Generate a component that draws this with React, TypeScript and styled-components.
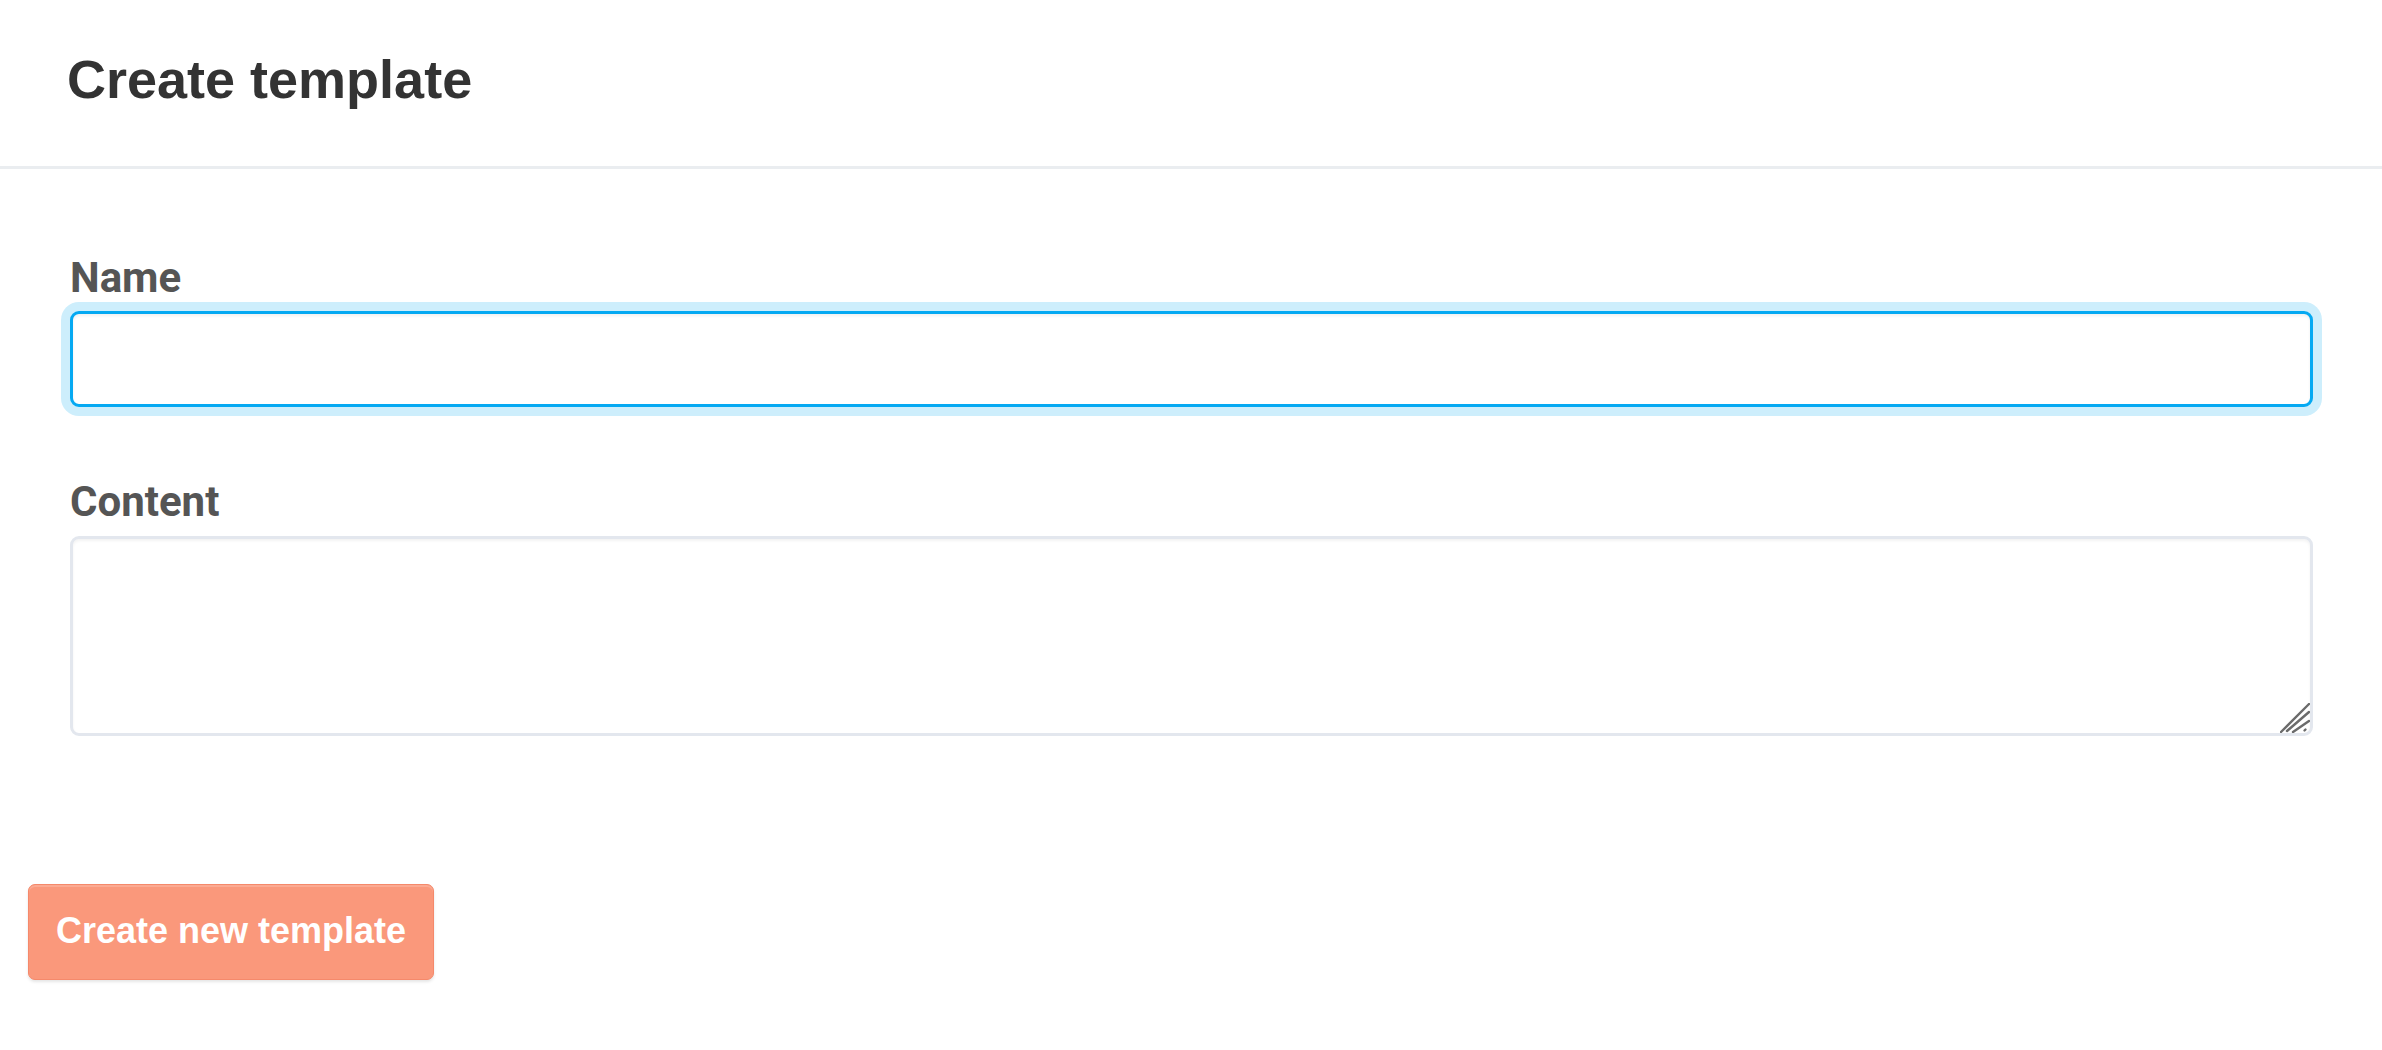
import { FC, useState } from 'react'
import styled, { createGlobalStyle } from 'styled-components'

const GlobalStyle = createGlobalStyle`
  html, body {
    margin: 0;
    padding: 0;
    background: #ffffff;
  }

  * {
    box-sizing: border-box;
  }
`

const Page = styled.div`
  display: flex;
  flex-flow: column nowrap;
  width: 100%;
  min-height: 1050px;
  background: #ffffff;
`

const Header = styled.header`
  padding: 48px 67px 56px;
  border-bottom: 3px solid #eaedf0;

  h1 {
    margin: 0;
    font-family: 'Liberation Sans', Arial, sans-serif;
    font-size: 54px;
    line-height: 62px;
    font-weight: 700;
    color: #333333;
  }
`

const Form = styled.form`
  display: flex;
  flex-flow: column nowrap;
  padding: 85px 69px 0 70px;
`

const Field = styled.div<{ $last?: boolean }>`
  display: flex;
  flex-flow: column nowrap;
  margin-bottom: ${({ $last }) => ($last ? '0' : '71px')};

  label {
    margin-bottom: ${({ $last }) => ($last ? '10px' : '9px')};
    font-family: Roboto, 'Noto Sans', sans-serif;
    font-size: 42px;
    line-height: 48px;
    font-weight: 700;
    color: #555555;
  }
`

const TextInput = styled.input`
  width: 100%;
  height: 96px;
  padding: 0 20px;
  border: 3px solid #05a9f2;
  border-radius: 9px;
  background: #ffffff;
  box-shadow: 0 0 0 9px #cdeefc, inset 0 2px 3px rgba(0, 0, 0, 0.06);
  font-family: Roboto, sans-serif;
  font-size: 30px;
  outline: none;
`

const AreaWrapper = styled.div`
  position: relative;
  width: 100%;

  svg {
    position: absolute;
    right: 3px;
    bottom: 3px;
    pointer-events: none;
  }
`

const TextArea = styled.textarea`
  display: block;
  width: 100%;
  height: 200px;
  padding: 16px 20px;
  border: 3px solid #e3e7ee;
  border-radius: 9px;
  background: #ffffff;
  box-shadow: inset 0 2px 3px rgba(0, 0, 0, 0.05);
  font-family: Roboto, sans-serif;
  font-size: 30px;
  resize: none;
  outline: none;
`

const Footer = styled.div`
  display: flex;
  padding: 148px 28px 0;
`

const SubmitButton = styled.button`
  padding: 25px 27px 27px;
  border: 1px solid #f5896b;
  border-radius: 7px;
  background: #fa987b;
  box-shadow: inset 0 2px 0 rgba(255, 255, 255, 0.18), 0 2px 3px rgba(0, 0, 0, 0.1);
  font-family: 'Liberation Sans', Arial, sans-serif;
  font-size: 36px;
  line-height: 42px;
  font-weight: 700;
  color: #ffffff;
  cursor: pointer;
`

const ResizeHandle: FC = () => (
  <svg width="30" height="30" viewBox="0 0 30 30">
    <g stroke="#6b6b6b" strokeWidth="2.4" strokeLinecap="round">
      <line x1="1" y1="29" x2="29" y2="1" />
      <line x1="7" y1="28" x2="29" y2="9" />
      <line x1="13" y1="29" x2="29" y2="18" />
      <line x1="24.5" y1="27.5" x2="25.5" y2="26.5" />
    </g>
  </svg>
)

const App: FC = () => {
  const [name, setName] = useState('')
  const [content, setContent] = useState('')

  return (
    <Page>
      <GlobalStyle />
      <Header>
        <h1>Create template</h1>
      </Header>
      <Form onSubmit={(e) => e.preventDefault()}>
        <Field>
          <label htmlFor="name">Name</label>
          <TextInput
            id="name"
            type="text"
            value={name}
            onChange={(e) => setName(e.target.value)}
          />
        </Field>
        <Field $last>
          <label htmlFor="content">Content</label>
          <AreaWrapper>
            <TextArea
              id="content"
              value={content}
              onChange={(e) => setContent(e.target.value)}
            />
            <ResizeHandle />
          </AreaWrapper>
        </Field>
      </Form>
      <Footer>
        <SubmitButton type="button">Create new template</SubmitButton>
      </Footer>
    </Page>
  )
}

export default App
